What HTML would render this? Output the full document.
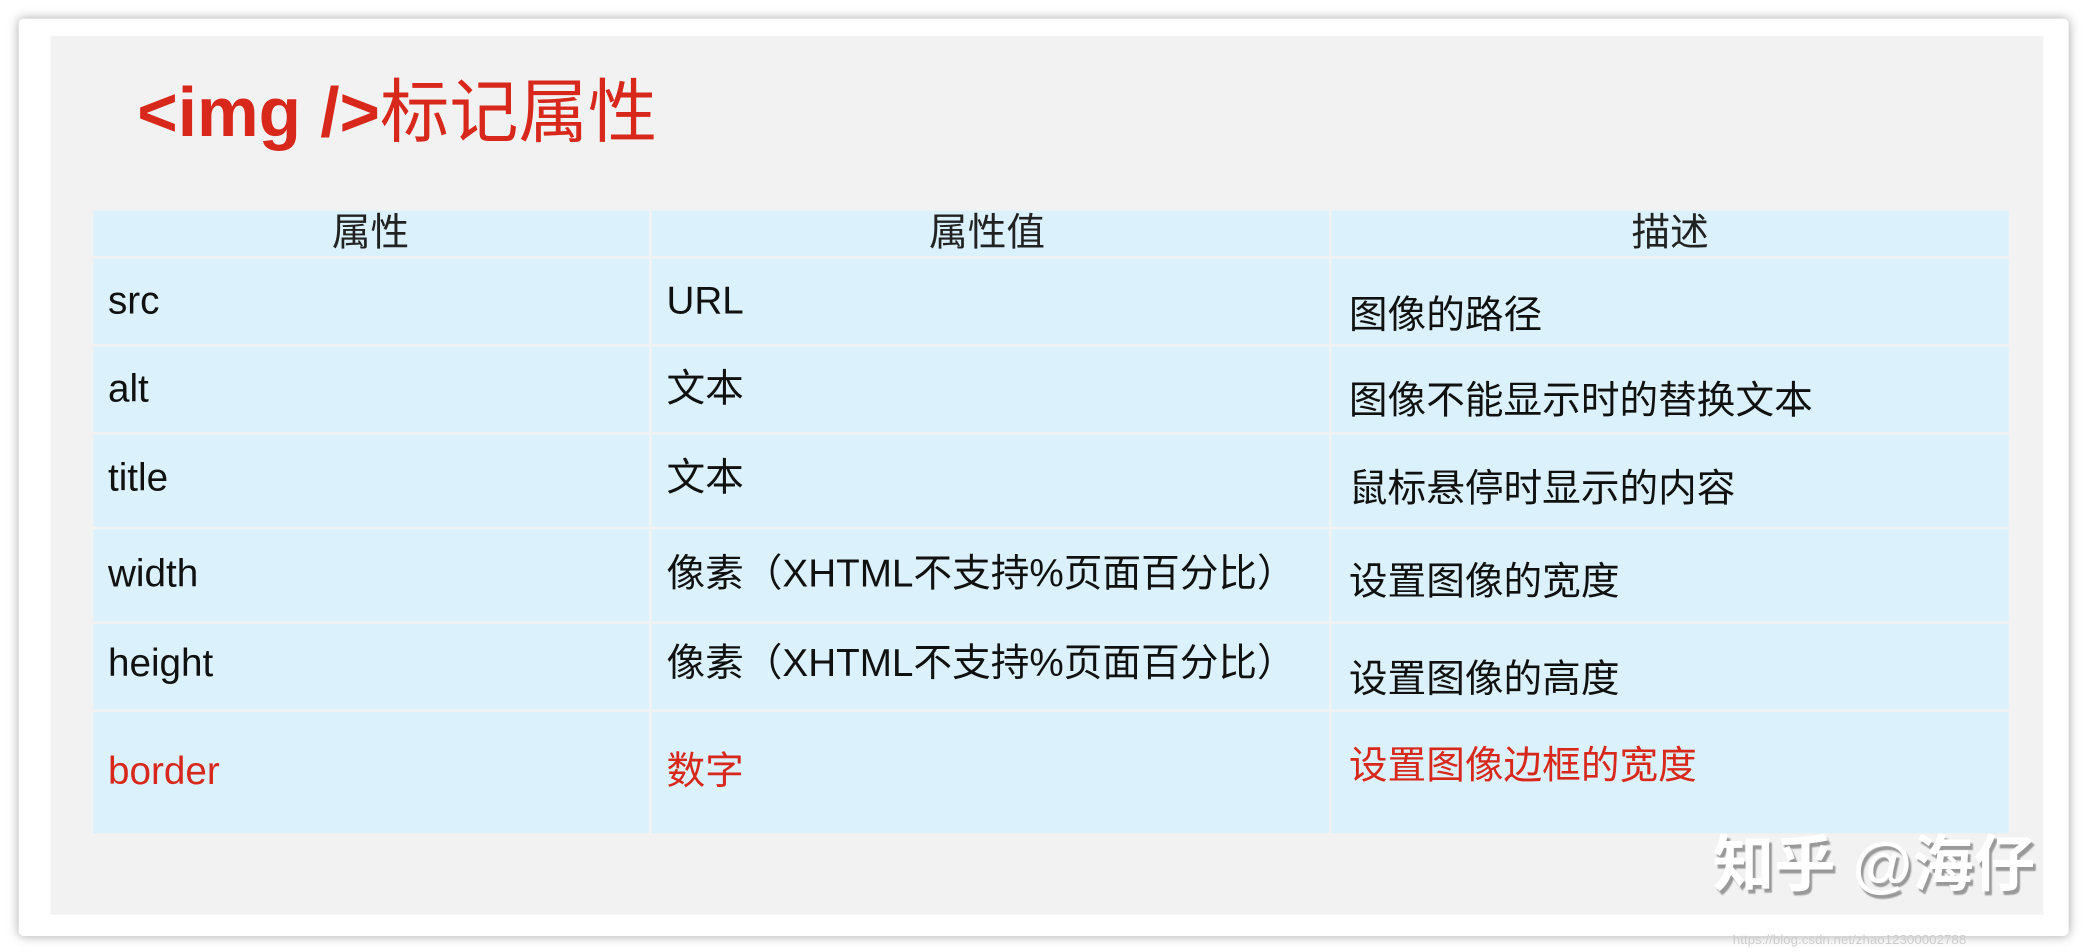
<!DOCTYPE html>
<html><head><meta charset="utf-8"><style>
html,body{margin:0;padding:0;background:#fff;}
body{width:2090px;height:952px;overflow:hidden;}
#s{position:absolute;left:0;top:0;width:1568px;height:714px;transform:scale(1.33291,1.3333);transform-origin:0 0;font-family:"Liberation Sans","Noto Sans CJK SC",sans-serif;}
.card{position:absolute;left:14px;top:14px;width:1538px;height:688px;background:#fff;box-shadow:0 0 8px rgba(0,0,0,.35);border-radius:4px;}
.panel{position:absolute;left:38px;top:27px;width:1495px;height:659px;background:#f2f2f2;}
.title{position:absolute;left:103px;top:54px;font-size:52px;line-height:62px;color:#d8281c;font-weight:bold;white-space:nowrap;}
.title span{font-weight:normal;}
.cell{position:absolute;background:#dbf1fc;}
.t{position:absolute;font-size:29px;line-height:34px;color:#111;white-space:nowrap;}
.h{font-size:29px;color:#222;}
.r{color:#d8281c;}
.wm{position:absolute;left:1285px;top:618px;font-size:46px;line-height:60px;color:#fff;font-weight:bold;text-shadow:2px 3px 1px #999;white-space:nowrap;}
.url{position:absolute;left:1300px;top:700px;font-size:10px;color:#ccc;}
</style></head><body><div id="s">
<div class="card"></div>
<div class="panel"></div>
<div class="title">&lt;img /&gt;<span>标记属性</span></div>
<div class="cell" style="left:70px;top:158px;width:417px;height:34px"></div>
<div class="cell" style="left:489px;top:158px;width:508px;height:34px"></div>
<div class="cell" style="left:999px;top:158px;width:508px;height:34px"></div>

<div class="cell" style="left:70px;top:194px;width:417px;height:64px"></div>
<div class="cell" style="left:489px;top:194px;width:508px;height:64px"></div>
<div class="cell" style="left:999px;top:194px;width:508px;height:64px"></div>

<div class="cell" style="left:70px;top:260px;width:417px;height:64px"></div>
<div class="cell" style="left:489px;top:260px;width:508px;height:64px"></div>
<div class="cell" style="left:999px;top:260px;width:508px;height:64px"></div>

<div class="cell" style="left:70px;top:326px;width:417px;height:69px"></div>
<div class="cell" style="left:489px;top:326px;width:508px;height:69px"></div>
<div class="cell" style="left:999px;top:326px;width:508px;height:69px"></div>

<div class="cell" style="left:70px;top:397px;width:417px;height:69px"></div>
<div class="cell" style="left:489px;top:397px;width:508px;height:69px"></div>
<div class="cell" style="left:999px;top:397px;width:508px;height:69px"></div>

<div class="cell" style="left:70px;top:468px;width:417px;height:64px"></div>
<div class="cell" style="left:489px;top:468px;width:508px;height:64px"></div>
<div class="cell" style="left:999px;top:468px;width:508px;height:64px"></div>

<div class="cell" style="left:70px;top:534px;width:417px;height:91px"></div>
<div class="cell" style="left:489px;top:534px;width:508px;height:91px"></div>
<div class="cell" style="left:999px;top:534px;width:508px;height:91px"></div>

<div class="t h" style="left:249px;top:158px">属性</div>
<div class="t h" style="left:697px;top:158px">属性值</div>
<div class="t h" style="left:1224px;top:158px">描述</div>

<div class="t" style="left:81px;top:209px">src</div>
<div class="t" style="left:500px;top:209px">URL</div>
<div class="t" style="left:1012px;top:220px">图像的路径</div>

<div class="t" style="left:81px;top:275px">alt</div>
<div class="t" style="left:500px;top:275px">文本</div>
<div class="t" style="left:1012px;top:284px">图像不能显示时的替换文本</div>

<div class="t" style="left:81px;top:342px">title</div>
<div class="t" style="left:500px;top:342px">文本</div>
<div class="t" style="left:1012px;top:350px">鼠标悬停时显示的内容</div>

<div class="t" style="left:81px;top:414px">width</div>
<div class="t" style="left:500px;top:414px">像素（XHTML不支持%页面百分比）</div>
<div class="t" style="left:1012px;top:420px">设置图像的宽度</div>

<div class="t" style="left:81px;top:481px">height</div>
<div class="t" style="left:500px;top:481px">像素（XHTML不支持%页面百分比）</div>
<div class="t" style="left:1012px;top:493px">设置图像的高度</div>

<div class="t r" style="left:81px;top:562px">border</div>
<div class="t r" style="left:500px;top:562px">数字</div>
<div class="t r" style="left:1012px;top:558px">设置图像边框的宽度</div>

<div class="wm">知乎 @海仔</div>
<div class="url">https://blog.csdn.net/zhao12300002788</div>
</div></body></html>
